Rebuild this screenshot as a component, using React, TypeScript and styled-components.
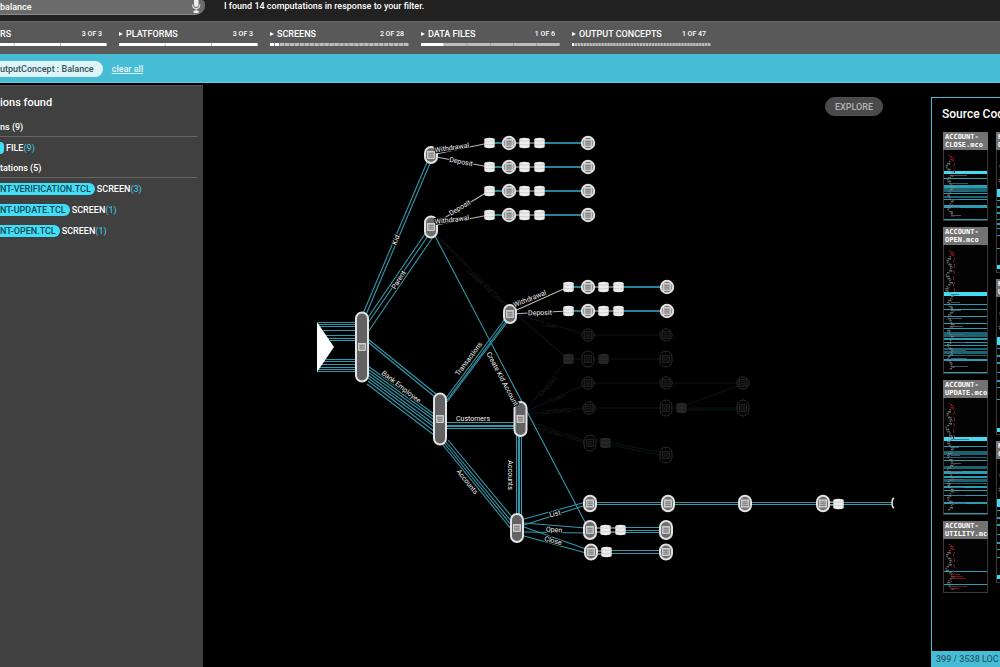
import React from 'react';
import styled, { createGlobalStyle } from 'styled-components';

const CYAN = '#46bcd6';
const LINE = '#3398ac';

const GlobalStyle = createGlobalStyle`
  * { box-sizing: border-box; }
  body {
    margin: 0;
    background: #000;
    color: #fff;
    font-family: Roboto, "Liberation Sans", sans-serif;
    overflow: hidden;
  }
  button, input { font: inherit; color: inherit; border: 0; padding: 0; background: none; }
`;

const Page = styled.div`
  display: flex;
  flex-direction: column;
  min-height: 100vh;
`;

const TopBar = styled.header`
  display: flex;
  align-items: flex-start;
  height: 21px;
  background: #212121;
`;

const SearchBox = styled.form`
  display: flex;
  align-items: center;
  width: 205px;
  height: 15px;
  padding-right: 3px;
  border-bottom: 1px solid #8a8a8a;
  border-radius: 0 4px 10px 0;
  background: #6b6b6b;
`;

const SearchInput = styled.input`
  flex: 1;
  min-width: 0;
  height: 12px;
  font-size: 9px;
  font-weight: 500;
  line-height: 12px;
  outline: none;
`;

const MicButton = styled.button`
  display: flex;
  width: 12px;
  height: 14px;
`;

const ResultMessage = styled.p`
  margin: 0 0 0 19px;
  font-size: 9px;
  font-weight: 500;
  line-height: 12px;
  white-space: nowrap;
`;

const FilterBar = styled.nav`
  display: flex;
  gap: 12px;
  height: 33px;
  padding-top: 6px;
  border-top: 1px solid #696969;
  background: #595959;
`;

const FilterTab = styled.button<{ $clipped?: boolean }>`
  display: flex;
  flex: none;
  flex-direction: column;
  gap: 3px;
  width: ${p => (p.$clipped ? 107 : 139)}px;
  text-align: left;
  white-space: nowrap;
`;

const FilterHead = styled.span`
  display: flex;
  align-items: center;
  width: 100%;
  height: 12px;
  padding-right: 5px;
`;

const FilterName = styled.span`
  font-size: 9px;
  font-weight: 500;
  line-height: 12px;
`;

const FilterCount = styled.span`
  margin-left: auto;
  font-size: 7px;
  font-weight: 500;
  line-height: 12px;
`;

const Arrow = styled.span`
  width: 7px;
  &::before {
    content: '';
    display: block;
    width: 0;
    border-left: 4px solid #fff;
    border-top: 2px solid transparent;
    border-bottom: 2px solid transparent;
  }
`;

const Segments = styled.svg`
  display: block;
  width: 100%;
  height: 3px;
`;

const ActiveFilters = styled.div`
  display: flex;
  align-items: center;
  gap: 9px;
  height: 29px;
  padding-top: 2px;
  border-bottom: 1px solid #6ccbe0;
  background: ${CYAN};
`;

const Chip = styled.button`
  height: 16px;
  padding-right: 9px;
  border-radius: 0 8px 8px 0;
  background: #def4f9;
  color: #33535c;
  font-size: 9px;
  font-weight: 500;
  line-height: 16px;
`;

const ClearLink = styled.a`
  color: #e2f6fa;
  font-size: 9px;
  font-weight: 500;
  line-height: 16px;
`;

const Body = styled.div`
  display: flex;
  flex: 1;
  padding-top: 2px;
`;

const Sidebar = styled.aside`
  flex: 0 0 203px;
  padding: 9px 6px 0 0;
  border-top: 1px solid #555;
  background: #404040;
`;

const SidebarTitle = styled.h1`
  margin: 0 0 7px;
  font-size: 11px;
  font-weight: 500;
  line-height: 16px;
`;

const GroupTitle = styled.h2`
  margin: 0;
  padding: 3px 0;
  border-bottom: 1px solid #666;
  font-size: 9px;
  font-weight: 500;
  line-height: 12px;
`;

const Results = styled.ul`
  margin: 0;
  padding: 0 0 1px;
  list-style: none;
`;

const Result = styled.li`
  display: flex;
  align-items: center;
  gap: 2px;
  height: 21px;
  font-size: 9px;
  font-weight: 500;
  line-height: 12px;
`;

const FileTag = styled.a`
  min-width: 4px;
  height: 12px;
  padding-right: 4px;
  border-radius: 0 6px 6px 0;
  background: #42def7;
  color: #12474f;
  text-decoration: none;
`;

const Tally = styled.span`
  color: #43b9d3;
`;

const Stage = styled.main`
  position: relative;
  flex: 1;
  min-width: 0;
`;

const Graph = styled.svg`
  display: block;
  width: 100%;
  font-family: Roboto, sans-serif;
  font-size: 7px;
`;

const ExploreButton = styled.button`
  position: absolute;
  top: 12px;
  right: 48px;
  width: 58px;
  height: 19px;
  border: 1px solid #505050;
  border-radius: 10px;
  background: #4a4a4a;
  color: #b4b4b4;
  font-size: 9px;
  font-weight: 500;
`;

const SourcePanel = styled.aside`
  display: flex;
  flex: 0 0 69px;
  flex-direction: column;
  margin-top: 12px;
  border: 1px solid ${CYAN};
  border-width: 1px 0 0 1px;
  overflow: hidden;
`;

const SourceTitle = styled.h2`
  margin: 8px 0 10px 10px;
  font-size: 12px;
  font-weight: 500;
  line-height: 16px;
  white-space: nowrap;
`;

const SourceColumns = styled.div`
  display: grid;
  grid-template-columns: 45px 45px;
  align-items: start;
  gap: 8px;
  flex: 1;
  padding-left: 11px;
`;

const SourceColumn = styled.div`
  display: flex;
  flex-direction: column;
  gap: 6px;
`;

const SourceFile = styled.article`
  overflow: hidden;
  background: #080808;
`;

const SourceName = styled.h3`
  height: 18px;
  margin: 0;
  padding: 1px 0 0 2px;
  background: #727272;
  font-family: "DejaVu Sans Mono", monospace;
  font-size: 7px;
  font-weight: 700;
  line-height: 8px;
  white-space: pre;
`;

const Minimap = styled.svg`
  display: block;
  width: 45px;
`;

const SourceFooter = styled.footer`
  height: 16px;
  padding-left: 4px;
  background: ${CYAN};
  color: #285f6d;
  font-size: 9px;
  font-weight: 500;
  line-height: 16px;
  white-space: nowrap;
`;

type Filter = { name: string; on: number; of: number; clipped?: boolean };

const filters: Filter[] = [
  { name: 'RS', on: 3, of: 3, clipped: true },
  { name: 'PLATFORMS', on: 3, of: 3 },
  { name: 'SCREENS', on: 2, of: 28 },
  { name: 'DATA FILES', on: 1, of: 6 },
  { name: 'OUTPUT CONCEPTS', on: 1, of: 47 },
];

function FilterItem({ name, on, of, clipped }: Filter) {
  const step = 139 / of;
  const start = clipped ? 32 : 0;
  return (
    <FilterTab type="button" $clipped={clipped}>
      <FilterHead>
        {!clipped && <Arrow />}
        <FilterName>{name}</FilterName>
        <FilterCount>{on} OF {of}</FilterCount>
      </FilterHead>
      <Segments viewBox={`${start} 0 ${139 - start} 3`} preserveAspectRatio="none" aria-hidden="true">
        <rect width="139" height="3" fill="#808080" />
        {Array.from({ length: of }, (_, i) => (
          <rect key={i} x={i * step} width={step - (of > 10 ? 0.9 : 0.5)} height="3" fill={i < on ? '#fff' : '#bcbcbc'} />
        ))}
      </Segments>
    </FilterTab>
  );
}

type Line = [number, number, number, number];

const lines: Line[] = [
  [318, 322.5, 358, 322.5], [318, 324.5, 358, 324.5], [319, 326.5, 358, 326.5], [323, 330.5, 358, 330.5],
  [326, 335.5, 358, 335.5], [328, 338.5, 358, 338.5], [330, 340.5, 358, 340.5],
  [326, 359.5, 358, 359.5], [324, 361.5, 358, 361.5], [322, 364.5, 358, 364.5], [320, 367.5, 358, 367.5],
  [318, 369.5, 358, 369.5], [317, 371.5, 358, 371.5],
  [362, 316, 428, 160], [365, 317, 431, 161],
  [367, 319, 427, 231], [368, 323, 430, 233], [368, 332, 433, 237],
  [368, 339, 436, 394], [368, 342, 435, 397],
  [368, 366, 434, 414], [368, 369, 434, 417], [368, 372, 434, 420], [368, 375, 434, 424],
  [368, 378, 434, 427], [368, 381, 434, 431], [367, 384, 434, 435],
  [446, 398, 505, 319], [447, 400, 507, 320], [447, 402, 508, 321],
  [435, 236, 587, 526],
  [447, 422.5, 515, 422.5], [447, 425.5, 515, 425.5], [447, 426.5, 515, 426.5], [447, 428.5, 515, 428.5],
  [442, 444, 512, 530], [444, 443, 512, 526], [446, 442, 512, 522], [448, 440, 512, 517],
  [516.5, 434, 516.5, 516], [518.5, 434, 518.5, 516], [519.5, 434, 519.5, 516], [521.5, 434, 521.5, 516],
  [524, 519, 586, 502], [524, 525, 586, 505],
  [524, 523, 586, 528], [524, 532, 586, 533],
  [524, 527, 586, 549], [524, 536, 586, 553],
  [590, 502.5, 892, 502.5], [590, 504.5, 892, 504.5],
  [625, 527.5, 666, 527.5], [625, 530.5, 666, 530.5], [625, 532.5, 666, 532.5],
  [610, 550.5, 666, 550.5], [610, 553.5, 666, 553.5],
];

const greyLines: Line[] = [
  [431, 155, 489, 143], [431, 156, 489, 167], [431, 226, 489, 191], [431, 226, 489, 215],
  [510, 313, 568, 287], [510, 314, 568, 311],
  [823, 502, 838, 502], [823, 505, 838, 505],
  [590, 528, 622, 528], [590, 532, 622, 532],
  [590, 551, 606, 551], [590, 554, 606, 554],
];

const dimLines: Line[] = [
  [435, 234, 508, 306], [516, 314, 588, 335], [516, 314, 568, 359], [525, 411, 568, 359],
  [527, 411, 588, 383], [527, 414, 588, 408], [527, 420, 590, 443], [527, 423, 590, 445],
  [588, 335, 666, 335], [568, 359, 666, 359], [588, 383, 743, 383], [588, 408, 743, 408],
  [681, 407, 743, 384], [681, 410, 743, 410], [605, 442, 666, 453], [605, 444, 666, 456],
];

const streams = [
  [489, 143], [489, 167], [489, 191], [489, 215], [568, 287], [568, 311],
];

type Spot = { x: number; y: number; h?: number };

const dimNodes: Spot[] = [
  { x: 588, y: 335, h: 13 }, { x: 666, y: 335, h: 13 }, { x: 588, y: 359, h: 16 }, { x: 666, y: 359, h: 16 },
  { x: 588, y: 383, h: 13 }, { x: 666, y: 383, h: 13 }, { x: 743, y: 383, h: 13 },
  { x: 589, y: 408, h: 13 }, { x: 666, y: 408, h: 16 }, { x: 743, y: 408, h: 16 },
  { x: 590, y: 443, h: 16 }, { x: 666, y: 455, h: 16 },
];
const dimStores: Spot[] = [{ x: 568, y: 359 }, { x: 603, y: 359 }, { x: 681, y: 408 }, { x: 605, y: 443 }];

const nodes: Spot[] = [
  { x: 431, y: 155, h: 16 }, { x: 431, y: 227, h: 21 }, { x: 510, y: 314, h: 18 },
  { x: 362, y: 347, h: 69 }, { x: 440, y: 419, h: 51 }, { x: 520.5, y: 419, h: 34 }, { x: 517, y: 528, h: 28 },
  { x: 590, y: 503.5, h: 15.5 }, { x: 668, y: 503.5, h: 15.5 }, { x: 745, y: 503.5, h: 15.5 }, { x: 823, y: 503.5, h: 15.5 },
  { x: 590, y: 530, h: 18 }, { x: 666, y: 530, h: 18 }, { x: 591, y: 552, h: 15 }, { x: 666, y: 552, h: 15 },
];
const stores: Spot[] = [{ x: 838, y: 504 }, { x: 605, y: 530 }, { x: 620, y: 530 }, { x: 606, y: 552 }];

type LabelSpec = [string, number, number, number];

const labels: LabelSpec[] = [
  ['Withdrawal', 452, 148, -8], ['Deposit', 461, 162, 11],
  ['Deposit', 460, 208, -30], ['Withdrawal', 452, 220, -7],
  ['Kid', 396, 240, -67], ['Parent', 399, 280, -57],
  ['Bank Employee', 401, 387, 38], ['Transactions', 469, 359, -53],
  ['Create Kid Account', 502, 379, 62], ['Customers', 473, 419, 0],
  ['Accounts', 467, 482, 51], ['Accounts', 510, 475, 90],
  ['List', 555, 514, -14], ['Open', 554, 530, 4], ['Close', 553, 541, 14],
  ['Withdrawal', 530, 299, -22], ['Deposit', 540, 313, -1],
];
const dimLabels: LabelSpec[] = [
  ['Create Kid Count', 487, 288, 42], ['Loan', 550, 325, 12], ['Deposit', 548, 386, -50],
  ['Loan', 557, 398, -24], ['Landpeto', 556, 411, -5], ['Customer', 548, 431, 18],
];

function Lines({ data, color }: { data: Line[]; color: string }) {
  return (
    <g stroke={color} strokeWidth="1.1">
      {data.map(([x1, y1, x2, y2], i) => <line key={i} x1={x1} y1={y1} x2={x2} y2={y2} />)}
    </g>
  );
}

function Labels({ data, color }: { data: LabelSpec[]; color: string }) {
  return (
    <g fill={color} stroke="#000" strokeWidth="2" strokeLinejoin="round" paintOrder="stroke" textAnchor="middle">
      {data.map(([text, x, y, turn], i) => (
        <text key={i} y="2" transform={`translate(${x} ${y}) rotate(${turn})`}>{text}</text>
      ))}
    </g>
  );
}

function ListNode({ x, y, h = 14, dim }: Spot & { dim?: boolean }) {
  const ink = dim ? '#2a2a2a' : '#e2e2e2';
  const round = h < 15;
  const tall = h > 21;
  const half = round ? 6.2 : 6;
  return (
    <g transform={`translate(${x} ${y})`}>
      <rect x={-half} y={round ? -half : -h / 2} width={half * 2} height={round ? half * 2 : h} rx={half}
        fill={dim ? '#040404' : tall ? '#626262' : '#6e6e6e'} stroke={ink} strokeWidth={dim ? 1 : 2} />
      <rect x="-3.5" y="-3.6" width="7" height="7.2" fill={dim ? '#080808' : '#b8b8b8'} stroke={ink} strokeWidth=".7" />
      <path d="M-2.5 -1.6H2.5M-2.5 0.2H2.5M-2.5 2H2.5" stroke={dim ? '#242424' : '#707070'} strokeWidth=".8" />
      {round && <path d="M-4.7 -2.8V2.8M4.7 -2.8V2.8" stroke={dim ? '#1c1c1c' : '#aaa'} strokeWidth=".8" />}
    </g>
  );
}

function Store({ x, y, dim }: Spot & { dim?: boolean }) {
  return (
    <g transform={`translate(${x + 0.5} ${y})`}>
      <path d="M-5.2 -3.6Q-5.2 -5.2 0 -5.2T5.2 -3.6V3.6Q5.2 5.2 0 5.2T-5.2 3.6Z" fill={dim ? '#262626' : '#ececec'} />
      <path d="M-5 -2.4Q0 -1 5 -2.4M-4.6 1.3Q0 2.5 4.6 1.3" fill="none" stroke={dim ? '#1b1b1b' : '#c4c4c4'} strokeWidth=".7" />
    </g>
  );
}

function Stream({ x, y }: Spot) {
  return (
    <g>
      <path d={`M${x} ${y}h19M${x + 52} ${y}h46`} stroke="#25849a" strokeWidth="1.8" />
      <path d={`M${x + 19} ${y}h32`} stroke="#aaa" strokeWidth="1.2" />
      <Store x={x} y={y} />
      <ListNode x={x + 20} y={y} />
      <Store x={x + 35} y={y} />
      <Store x={x + 50} y={y} />
      <ListNode x={x + 99} y={y} />
    </g>
  );
}

function FlowGraph() {
  return (
    <Graph viewBox="203 85 728 582" preserveAspectRatio="xMinYMin meet" role="img" aria-label="Computation flow">
      <Lines data={dimLines} color="#0a1417" />
      {dimNodes.map((n, i) => <ListNode key={i} {...n} dim />)}
      {dimStores.map((n, i) => <Store key={i} {...n} dim />)}
      <Labels data={dimLabels} color="#1d1d1d" />
      <Lines data={lines} color={LINE} />
      <Lines data={greyLines} color="#b8b8b8" />
      <path d="M317 322L334 347L317 372Z" fill="#fff" />
      {nodes.map((n, i) => <ListNode key={i} {...n} />)}
      {stores.map((n, i) => <Store key={i} {...n} />)}
      {streams.map(([x, y]) => <Stream key={y} x={x} y={y} />)}
      <path d="M894 498Q892 499 892 503T894 508" fill="none" stroke="#ddd" strokeWidth="1.6" />
      <Labels data={labels} color="#f2f2f2" />
    </Graph>
  );
}

/* mark: [top, height, brightness], brightness 2 is the strongest highlight */
type Mark = [number, number, number];
type Source = { name: string; height: number; marks: Mark[] };

const leftSources: Source[] = [
  {
    name: 'ACCOUNT-\nCLOSE.mco', height: 71,
    marks: [[21, 3, 2], [28, 1, 1], [35, 3, 1], [38, 4, 0], [43, 1, 1], [46, 2, 0], [49, 1, 1], [55, 3, 1], [69, 1, 1]],
  },
  {
    name: 'ACCOUNT-\nOPEN.mco', height: 129,
    marks: [[47, 4, 2], [59, 1, 1], [64, 1, 1], [71, 1, 1], [78, 1, 1], [83, 1, 1], [87, 5, 0], [93, 2, 1], [97, 1, 1],
      [100, 1, 1], [103, 2, 0], [106, 3, 0], [110, 1, 0], [114, 2, 1], [127, 1, 1]],
  },
  {
    name: 'ACCOUNT-\nUPDATE.mco', height: 117,
    marks: [[39, 4, 2], [48, 1, 1], [53, 4, 0], [59, 1, 0], [62, 1, 1], [68, 3, 0], [73, 3, 1], [78, 2, 1], [81, 3, 0],
      [85, 1, 0], [88, 2, 1], [92, 1, 1], [97, 1, 1], [104, 2, 1], [115, 1, 1]],
  },
  { name: 'ACCOUNT-\nUTILITY.mco', height: 54, marks: [[32, 1, 1], [45, 1, 1]] },
];

const rightSources: Source[] = [
  { name: 'KID-\nOPEN.mco', height: 123, marks: [[39, 8, 2], [50, 1, 1], [56, 2, 1], [62, 2, 1], [69, 1, 1], [73, 2, 1], [78, 1, 1], [85, 1, 1], [98, 1, 1], [115, 4, 2]] },
  { name: 'KID-\nUPDATE.mco', height: 138, marks: [[40, 8, 2], [51, 1, 1], [58, 2, 1], [65, 2, 1], [75, 1, 1], [83, 2, 1], [90, 1, 1], [102, 1, 1], [131, 4, 2]] },
  { name: 'KID-\nCLOSE.mco', height: 124, marks: [[40, 8, 2], [51, 1, 1], [58, 2, 1], [65, 2, 1], [75, 1, 1], [83, 2, 1], [90, 1, 1], [98, 1, 1], [116, 4, 2]] },
];

const markColors = ['#1c6371', '#2a9db2', '#3fdcf2'];

function CodeMinimap({ height, marks }: { height: number; marks: Mark[] }) {
  const rows = Math.floor((height - 8) / 2);
  const first = marks[0][0];
  const short = height < 60;
  return (
    <Minimap viewBox={`0 0 45 ${height}`} aria-hidden="true">
      <rect x=".5" y="-1" width="44" height={height + 0.5} fill="#030303" stroke="#3a3a36" />
      {marks.map(([y, h, level], i) => <rect key={i} x="1" y={y} width="43" height={h} fill={markColors[level]} />)}
      {Array.from({ length: rows }, (_, i) => {
        const y = i * 2 + 5;
        const indent = 6 + Math.sin(i * 0.9) * 2 - (y < first ? y / first : 0) * 2;
        const body = y > first;
        return (
          <g key={i}>
            <rect x={indent} y={y} width={1.5 + ((i * 5) % 3)} height="1.4" fill={i < 3 ? '#b02028' : '#8a8a8a'} opacity=".7" />
            {i % 2 === 0 && <rect x={indent + 2} y={y + 1} width="1.5" height="1" fill={i < 3 ? '#b02028' : '#666'} opacity=".6" />}
            {!body && i > 1 && i % 3 !== 0 && <rect x={11 - ((i * 3) % 4) / 3} y={y} width="1" height="2" fill="#7a1a20" />}
            {body && (short ? i % 6 > 2 : i % 4 === 2) && (
              <rect x="8" y={y} width={8 + ((i * 3) % 11)} height="1" fill={short ? '#8a1d22' : '#59627a'} opacity=".8" />
            )}
          </g>
        );
      })}
    </Minimap>
  );
}

function SourceList({ items }: { items: Source[] }) {
  return (
    <SourceColumn>
      {items.map(s => (
        <SourceFile key={s.name}>
          <SourceName>{s.name}</SourceName>
          <CodeMinimap height={s.height} marks={s.marks} />
        </SourceFile>
      ))}
    </SourceColumn>
  );
}

export default function App() {
  return (
    <Page>
      <GlobalStyle />
      <TopBar>
        <SearchBox>
          <SearchInput aria-label="Filter" defaultValue="balance" />
          <MicButton type="button" aria-label="Voice input">
            <svg width="12" height="14" viewBox="0 0 12 14">
              <rect x="4" y="-2" width="4.5" height="9" rx="2.2" fill="#eee" />
              <path d="M2.6 4.5Q2.8 8.6 6.2 8.6T9.8 4.5M6.2 8.6V11" fill="none" stroke="#ddd" strokeWidth="1.2" />
              <ellipse cx="6.2" cy="11.8" rx="3" ry="1.4" fill="#eee" />
            </svg>
          </MicButton>
        </SearchBox>
        <ResultMessage>I found 14 computations in response to your filter.</ResultMessage>
      </TopBar>
      <FilterBar>
        {filters.map(f => <FilterItem key={f.name} {...f} />)}
      </FilterBar>
      <ActiveFilters>
        <Chip type="button">utputConcept : Balance</Chip>
        <ClearLink href="#clear">clear all</ClearLink>
      </ActiveFilters>
      <Body>
        <Sidebar>
          <SidebarTitle>ions found</SidebarTitle>
          <GroupTitle>ns (9)</GroupTitle>
          <Results>
            <Result>
              <FileTag href="#file" aria-label="File" />
              <span>FILE<Tally>(9)</Tally></span>
            </Result>
          </Results>
          <GroupTitle>tations (5)</GroupTitle>
          <Results>
            <Result>
              <FileTag href="#verification">NT-VERIFICATION.TCL</FileTag>
              <span>SCREEN<Tally>(3)</Tally></span>
            </Result>
            <Result>
              <FileTag href="#update">NT-UPDATE.TCL</FileTag>
              <span>SCREEN<Tally>(1)</Tally></span>
            </Result>
            <Result>
              <FileTag href="#open">NT-OPEN.TCL</FileTag>
              <span>SCREEN<Tally>(1)</Tally></span>
            </Result>
          </Results>
        </Sidebar>
        <Stage>
          <FlowGraph />
          <ExploreButton type="button">EXPLORE</ExploreButton>
        </Stage>
        <SourcePanel>
          <SourceTitle>Source Code</SourceTitle>
          <SourceColumns>
            <SourceList items={leftSources} />
            <SourceList items={rightSources} />
          </SourceColumns>
          <SourceFooter>399 / 3538 LOC</SourceFooter>
        </SourcePanel>
      </Body>
    </Page>
  );
}
